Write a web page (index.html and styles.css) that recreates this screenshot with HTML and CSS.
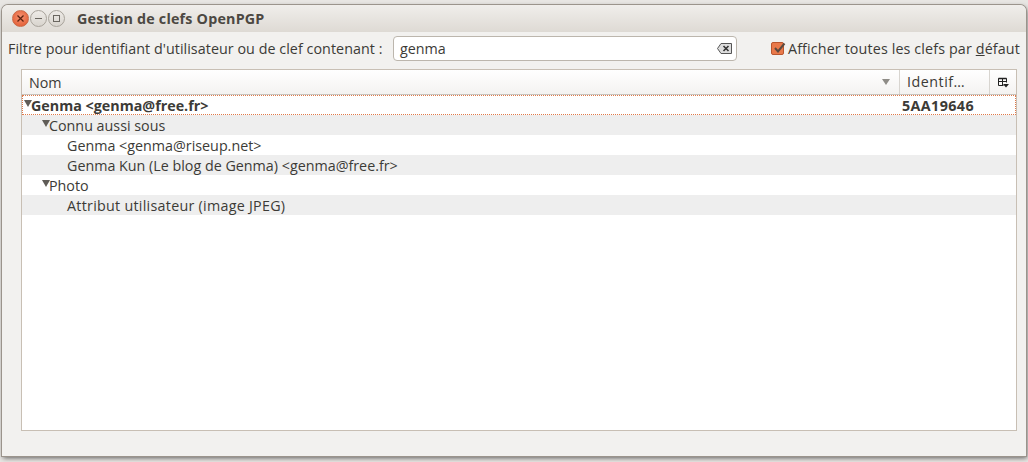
FILE: index.html
```html
<!DOCTYPE html>
<html lang="fr">
<head>
    <meta charset="UTF-8">
    <title>Gestion de clefs OpenPGP</title>
    <link rel="stylesheet" href="styles.css">
</head>
<body>
    <div class="window">
        <div class="titlebar">
            <div class="win-buttons">
                <span class="win-btn close">
                    <svg width="9" height="9" viewBox="0 0 9 9"><path d="M1.500 1.500l6 6M7.500 1.500l-6 6" stroke="#5c2210" stroke-width="1.300"/></svg>
                </span>
                <span class="win-btn">
                    <svg width="9" height="9" viewBox="0 0 9 9"><path d="M1 4.500h7" stroke="#6a6660" stroke-width="1"/></svg>
                </span>
                <span class="win-btn">
                    <svg width="9" height="9" viewBox="0 0 9 9"><rect x="1.500" y="1.500" width="6" height="6" fill="none" stroke="#6a6660"/></svg>
                </span>
            </div>
            <span class="win-title">Gestion de clefs OpenPGP</span>
        </div>
        <div class="content">
            <div class="filter-row">
                <span class="filter-label">Filtre pour identifiant d'utilisateur ou de clef contenant :</span>
                <div class="search">
                    <span>genma</span>
                    <svg class="clear-icon" width="15" height="11" viewBox="0 0 15 11">
                        <path d="M4 .5h10.500v10H4L.5 5.500z" fill="#ddd" stroke="#555"/>
                        <path d="M6.500 3l5 5M11.500 3l-5 5" stroke="#333" stroke-width="1.600"/>
                    </svg>
                </div>
                <label class="show-all">
                    <span class="checkbox">
                        <svg width="15" height="13" viewBox="0 0 15 13"><path d="M3 6l3 3.500L12.500 1.500" fill="none" stroke="#5b4a40" stroke-width="2"/></svg>
                    </span>
                    <span>Afficher toutes les clefs par <u>d</u>éfaut</span>
                </label>
            </div>
            <div class="tree">
                <div class="tree-head">
                    <div class="col-name">
                        <span>Nom</span>
                        <span class="sort-arrow"></span>
                    </div>
                    <div class="col-id">Identif…</div>
                    <div class="col-picker">
                        <svg width="11" height="11" viewBox="0 0 11 11">
                            <path d="M.5 8.500v-7h8v4M.5 4.500h8M4.500 1.500v7M.5 8.500h5" fill="none" stroke="#222"/>
                            <path d="M.5 1.500h8" fill="none" stroke="#222" stroke-width="1.500"/>
                            <path d="M5 7h6l-3 3.500z" fill="#222"/>
                        </svg>
                    </div>
                </div>
                <div class="row selected bold">
                    <div class="cell-name"><span class="twisty"></span>Genma &lt;genma@free.fr&gt;</div>
                    <div class="cell-id">5AA19646</div>
                </div>
                <div class="row alt level-1">
                    <div class="cell-name"><span class="twisty"></span>Connu aussi sous</div>
                </div>
                <div class="row level-2">
                    <div class="cell-name">Genma &lt;genma@riseup.net&gt;</div>
                </div>
                <div class="row alt level-2">
                    <div class="cell-name">Genma Kun (Le blog de Genma) &lt;genma@free.fr&gt;</div>
                </div>
                <div class="row level-1">
                    <div class="cell-name"><span class="twisty"></span>Photo</div>
                </div>
                <div class="row alt level-2">
                    <div class="cell-name attr-name">Attribut utilisateur (image JPEG)</div>
                </div>
            </div>
        </div>
    </div>
</body>
</html>
```

FILE: styles.css
```css
html, body {
    margin: 0;
    height: 100%;
}

body {
    background: #e8e6e3;
    font-family: "Open Sans", "Noto Sans", sans-serif;
    font-size: 14.3px;
    color: #3c3b37;
    overflow: hidden;
}

.window {
    box-sizing: border-box;
    width: 1024px;
    height: 451px;
    margin: 5px 0 0 2px;
    display: flex;
    flex-direction: column;
    background: #f2f1ef;
    border-radius: 6px 6px 0 0;
    box-shadow: 0 0 0 1px #9b948c, 1px 2px 5px rgba(0, 0, 0, 0.6);
}

.titlebar {
    height: 27px;
    flex: none;
    display: flex;
    align-items: center;
    padding-left: 10px;
    background: linear-gradient(to bottom, #f0eeeb, #dedad4);
    border-radius: 6px 6px 0 0;
}

.win-buttons {
    display: flex;
    gap: 1px;
    width: 65px;
}

.win-btn {
    width: 15px;
    height: 15px;
    border-radius: 50%;
    display: flex;
    align-items: center;
    justify-content: center;
    background: linear-gradient(to bottom, #eeebe7, #d8d4ce);
    border: 1px solid #a8a39b;
}

.win-btn.close {
    background: radial-gradient(circle at 50% 40%, #f59272, #e0552a);
    border-color: #c96a48;
}

.win-title {
    font-weight: 700;
    color: #4c4842;
    letter-spacing: 0.2px;
}

.content {
    flex: 1;
    display: flex;
    flex-direction: column;
    padding: 4px 9px 25px 6px;
    min-height: 0;
}

.filter-row {
    display: flex;
    align-items: center;
    height: 25px;
    margin-bottom: 8px;
}

.filter-label {
    width: 385px;
    flex: none;
    white-space: nowrap;
    letter-spacing: 0.05px;
}

.search {
    box-sizing: border-box;
    width: 344px;
    height: 25px;
    flex: none;
    display: flex;
    align-items: center;
    justify-content: space-between;
    padding: 0 4px 0 6px;
    background: #fff;
    border: 1px solid #bcb6ad;
    border-radius: 4px;
}

.show-all {
    display: flex;
    align-items: center;
    gap: 4px;
    margin-left: 34px;
    white-space: nowrap;
    letter-spacing: 0.13px;
}

.checkbox {
    box-sizing: border-box;
    width: 13px;
    height: 13px;
    display: flex;
    align-items: center;
    justify-content: flex-start;
    background: #e9794a;
    border: 1px solid #b9562f;
    border-radius: 2px;
}

.checkbox svg {
    flex: none;
}

.tree {
    flex: 1;
    margin-left: 13px;
    background: #fff;
    border: 1px solid #c8bfb4;
}

.tree-head {
    display: flex;
    height: 24px;
    background: linear-gradient(to bottom, #ffffff, #f4f3f1);
    border-bottom: 1px solid #c8c4be;
}

.col-name {
    flex: 1;
    display: flex;
    align-items: center;
    justify-content: space-between;
    padding: 0 9px 0 7px;
    border-right: 1px solid #d8d5d0;
}

.sort-arrow {
    width: 0;
    height: 0;
    border-left: 4px solid transparent;
    border-right: 4px solid transparent;
    border-top: 6px solid #8f8c87;
}

.col-id {
    width: 82px;
    padding-left: 7px;
    line-height: 24px;
    border-right: 1px solid #d8d5d0;
    letter-spacing: 0.5px;
    white-space: nowrap;
}

.col-picker {
    width: 26px;
    display: flex;
    align-items: center;
    justify-content: center;
}

.row {
    display: flex;
    height: 20px;
    line-height: 20px;
    box-sizing: border-box;
    white-space: nowrap;
}

.row.alt {
    background: #eeeeee;
}

.row.selected {
    border: 1px dotted #e07a4a;
    line-height: 18px;
}

.row.bold {
    font-weight: 700;
}

.cell-name {
    flex: 1;
    display: flex;
    align-items: center;
    padding-top: 1px;
}

.attr-name {
    letter-spacing: 0.27px;
}

.cell-id {
    width: 113px;
    flex: none;
    padding-top: 1px;
    letter-spacing: 0.4px;
}

.twisty {
    width: 0;
    height: 0;
    margin: 0 -1px 5px 0;
    border-left: 4px solid transparent;
    border-right: 4px solid transparent;
    border-top: 7px solid #5f5c57;
}

.selected .cell-name {
    padding-left: 1px;
}

.level-1 .cell-name {
    padding-left: 20px;
}

.level-2 .cell-name {
    padding-left: 45px;
}
```
